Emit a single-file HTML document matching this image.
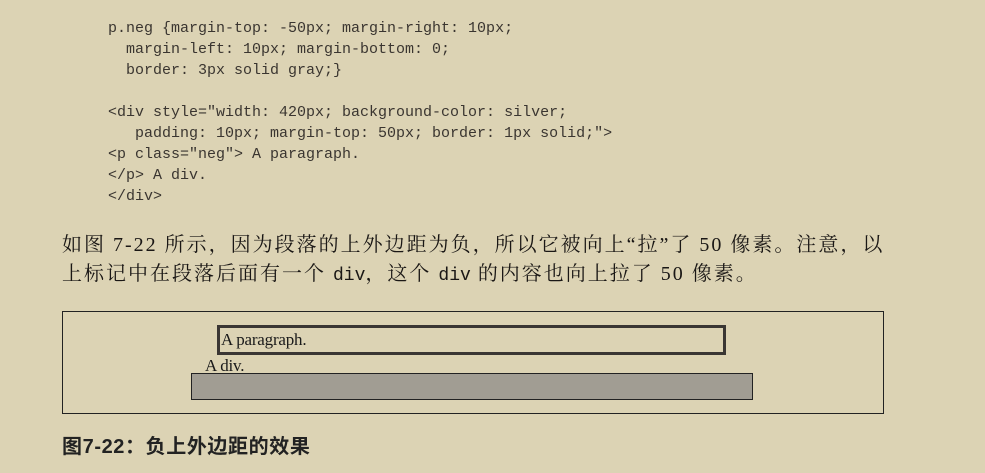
<html><head><style>
body{margin:0;width:985px;height:473px;background:#dcd3b4;position:relative;overflow:hidden;font-family:"Liberation Sans","Noto Sans CJK SC",sans-serif;color:#2a2622}
.code{position:absolute;left:108px;font-family:"Liberation Mono",monospace;font-size:15px;white-space:pre;color:#3a3530;line-height:21px}
.t{position:absolute;left:62px;font-size:20px;letter-spacing:2px;white-space:nowrap;color:#1a1715;font-family:"Liberation Serif","Noto Serif CJK SC",serif}
.m{font-family:"Liberation Mono",monospace;font-size:18px;letter-spacing:0}
</style></head><body>
<div class="code" style="top:18px">p.neg {margin-top: -50px; margin-right: 10px;
  margin-left: 10px; margin-bottom: 0;
  border: 3px solid gray;}

&lt;div style="width: 420px; background-color: silver;
   padding: 10px; margin-top: 50px; border: 1px solid;"&gt;
&lt;p class="neg"&gt; A paragraph.
&lt;/p&gt; A div.
&lt;/div&gt;</div>
<div class="t" style="top:228px">如图 7-22 所示，因为段落的上外边距为负，所以它被向上“拉”了 50 像素。注意，以</div>
<div class="t" style="top:257px">上标记中在段落后面有一个 <span class="m">div</span>，这个 <span class="m">div</span> 的内容也向上拉了 50 像素。</div>
<div style="position:absolute;left:62px;top:311px;width:820px;height:101px;border:1.5px solid #222"></div>
<div style="position:absolute;left:217px;top:325px;width:503px;height:24px;border:3px solid #3a3633"></div>
<div style="position:absolute;left:221px;top:330px;font-family:'Liberation Serif',serif;font-size:17px;letter-spacing:-0.2px;color:#1a1a1a">A paragraph.</div>
<div style="position:absolute;left:205px;top:356px;font-family:'Liberation Serif',serif;font-size:17px;letter-spacing:-0.2px;color:#1a1a1a">A div.</div>
<div style="position:absolute;left:191px;top:373px;width:560px;height:25px;background:#a19d93;border:1.5px solid #222"></div>
<div style="position:absolute;left:62px;top:430px;font-size:20px;font-weight:bold;letter-spacing:0.6px;color:#222">图7-22：负上外边距的效果</div>
</body></html>
